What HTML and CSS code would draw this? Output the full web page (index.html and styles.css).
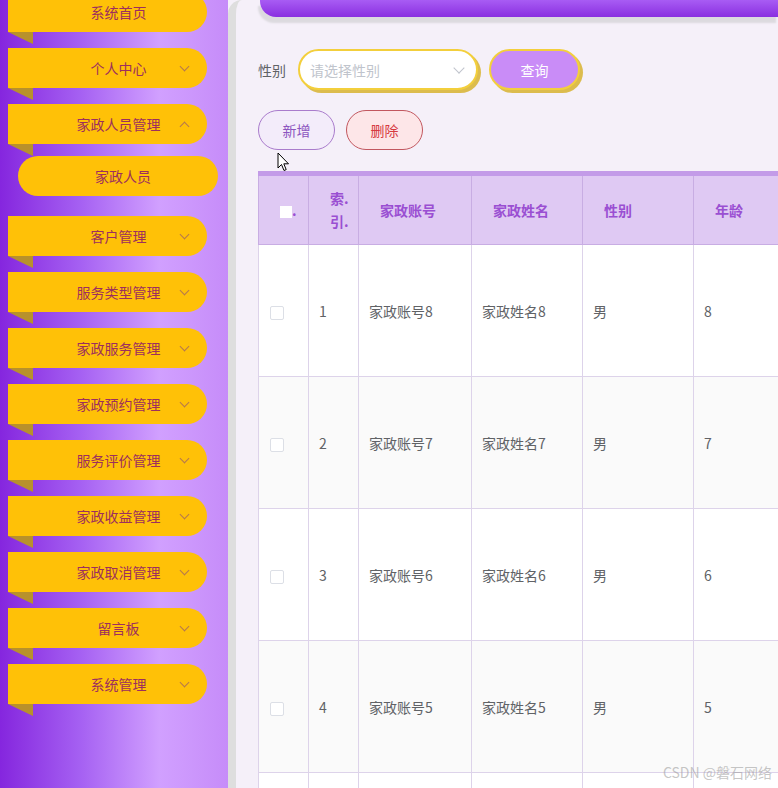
FILE: index.html
```html
<!DOCTYPE html>
<html lang="zh-CN">
	<head>
		<meta charset="UTF-8" />
		<meta name="viewport" content="width=device-width, initial-scale=1.0" />
		<title>家政人员</title>
		<link rel="stylesheet" href="styles.css">
	</head>

	<body>
		<div class="sidebar">
			<ul class="menu">
				<li class="item">系统首页</li>
				<li class="item has-sub">个人中心<span class="arrow"></span></li>
				<li class="item has-sub open">家政人员管理<span class="arrow up"></span></li>
				<li class="sub-item">家政人员</li>
				<li class="item has-sub">客户管理<span class="arrow"></span></li>
				<li class="item has-sub">服务类型管理<span class="arrow"></span></li>
				<li class="item has-sub">家政服务管理<span class="arrow"></span></li>
				<li class="item has-sub">家政预约管理<span class="arrow"></span></li>
				<li class="item has-sub">服务评价管理<span class="arrow"></span></li>
				<li class="item has-sub">家政收益管理<span class="arrow"></span></li>
				<li class="item has-sub">家政取消管理<span class="arrow"></span></li>
				<li class="item has-sub">留言板<span class="arrow"></span></li>
				<li class="item has-sub">系统管理<span class="arrow"></span></li>
			</ul>
		</div>

		<div class="main">
			<div class="topbar"></div>

			<div class="search">
				<label class="search-label">性别</label>
				<div class="select">
					<span class="placeholder">请选择性别</span>
					<span class="select-arrow"></span>
				</div>
				<button class="btn-query">查询</button>
			</div>

			<div class="actions">
				<button class="btn-add">新增</button>
				<button class="btn-del">删除</button>
			</div>

			<table class="grid">
				<colgroup>
					<col style="width: 50px" />
					<col style="width: 50px" />
					<col style="width: 113px" />
					<col style="width: 111px" />
					<col style="width: 111px" />
					<col style="width: 111px" />
				</colgroup>
				<thead>
					<tr>
						<th><span class="check head-check"></span>.</th>
						<th>索.<br />引.</th>
						<th>家政账号</th>
						<th>家政姓名</th>
						<th>性别</th>
						<th>年龄</th>
					</tr>
				</thead>
				<tbody>
					<tr>
						<td><span class="check"></span></td>
						<td>1</td>
						<td>家政账号8</td>
						<td>家政姓名8</td>
						<td>男</td>
						<td>8</td>
					</tr>
					<tr>
						<td><span class="check"></span></td>
						<td>2</td>
						<td>家政账号7</td>
						<td>家政姓名7</td>
						<td>男</td>
						<td>7</td>
					</tr>
					<tr>
						<td><span class="check"></span></td>
						<td>3</td>
						<td>家政账号6</td>
						<td>家政姓名6</td>
						<td>男</td>
						<td>6</td>
					</tr>
					<tr>
						<td><span class="check"></span></td>
						<td>4</td>
						<td>家政账号5</td>
						<td>家政姓名5</td>
						<td>男</td>
						<td>5</td>
					</tr>
					<!-- next row starts at the bottom edge -->
					<tr>
						<td></td>
						<td></td>
						<td></td>
						<td></td>
						<td></td>
						<td></td>
					</tr>
				</tbody>
			</table>

			<!-- mouse pointer captured in the screenshot -->
			<svg class="cursor" width="13" height="20" viewBox="0 0 13 20">
				<path d="M1 1 L1 16 L4.5 12.5 L7 18.5 L9.2 17.6 L6.8 11.8 L11.5 11.8 Z" fill="#fff" stroke="#000" stroke-width="1" stroke-linejoin="round" />
			</svg>

			<div class="watermark">CSDN @磐石网络</div>
		</div>
	</body>
</html>
```

FILE: styles.css
```css
* {
	box-sizing: border-box;
}

body {
	margin: 0;
	height: 788px;
	overflow: hidden;
	display: flex;
	font-family: "Noto Sans CJK SC", "Liberation Sans", sans-serif;
	font-size: 14px;
	background: #f5f0f9;
}

/* sidebar */

.sidebar {
	width: 228px;
	flex-shrink: 0;
	height: 100%;
	background: linear-gradient(90deg, #8526de 0%, #a560f2 35%, #d1a0ff 70%, #c68cf9 100%);
}

.menu {
	list-style: none;
	margin: -8px 0 0;
	padding: 0;
}

.item {
	position: relative;
	margin: 0 0 16px 8px;
	width: 199px;
	height: 40px;
	line-height: 40px;
	padding-left: 22px;
	text-align: center;
	color: #9c2f5e;
	background: #ffc107;
	border-radius: 0 20px 20px 0;
}

/* folded ribbon corner under each item */
.item::after {
	content: "";
	position: absolute;
	left: 0;
	top: 40px;
	border-top: 12px solid #b8912c;
	border-left: 25px solid transparent;
}

.item.open {
	margin-bottom: 12px;
}

.sub-item {
	margin: 0 0 20px 18px;
	width: 200px;
	height: 40px;
	line-height: 40px;
	padding-left: 10px;
	text-align: center;
	color: #9c2f5e;
	background: #ffc107;
	border-radius: 20px;
}

.arrow {
	position: absolute;
	right: 19px;
	top: 15px;
	width: 7px;
	height: 7px;
	border-right: 1px solid #b5784e;
	border-bottom: 1px solid #b5784e;
	transform: rotate(45deg);
}

.arrow.up {
	top: 19px;
	transform: rotate(-135deg);
}

/* main area */

.main {
	position: relative;
	flex: 1;
	min-width: 0;
	height: 100%;
	overflow: hidden;
	border-left: 8px solid #dedede;
	border-top-left-radius: 14px;
	padding-left: 22px;
}

.topbar {
	margin-left: 2px;
	height: 17px;
	border-bottom-left-radius: 16px;
	background: linear-gradient(180deg, #a85cf4, #8a2fe0);
	box-shadow: -2px 6px 2px #dcdadf;
}

.search {
	display: flex;
	align-items: center;
	margin-top: 32px;
	height: 41px;
}

.search-label {
	color: #606266;
	margin-right: 12px;
}

.select {
	position: relative;
	width: 180px;
	height: 41px;
	border: 2px solid #f3cf3c;
	border-radius: 21px;
	background: #fff;
	box-shadow: 3px 3px 0 #dcbc4e;
	display: flex;
	align-items: center;
	padding-left: 10px;
}

.placeholder {
	color: #c0c4cc;
}

.select-arrow {
	position: absolute;
	right: 13px;
	top: 13px;
	width: 8px;
	height: 8px;
	border-right: 1px solid #c0c4cc;
	border-bottom: 1px solid #c0c4cc;
	transform: rotate(45deg);
}

button {
	font-family: inherit;
	font-size: 14px;
	cursor: pointer;
}

.btn-query {
	margin-left: 11px;
	width: 91px;
	height: 41px;
	border: 2px solid #f3cf3c;
	border-radius: 21px;
	background: #c98cf7;
	color: #fff;
	box-shadow: 3px 3px 0 #dcbc4e;
}

.actions {
	display: flex;
	gap: 11px;
	margin-top: 20px;
}

.btn-add,
.btn-del {
	width: 77px;
	height: 40px;
	border-radius: 20px;
}

.btn-add {
	border: 1px solid #a97bcc;
	background: #f3ecfa;
	color: #8c55bf;
}

.btn-del {
	border: 1px solid #c2575f;
	background: #fde6e8;
	color: #d6393f;
}

/* table */

.grid {
	margin-top: 21px;
	border-collapse: collapse;
	table-layout: fixed;
	width: 546px;
	border-top: 5px solid #c39be8;
}

.grid th {
	height: 71px;
	background: #dfc9f3;
	color: #9a4fd2;
	font-weight: 600;
	text-align: left;
	border: 1px solid #c8ade3;
	border-top: none;
	line-height: 23px;
	padding: 0 0 0 21px;
	white-space: nowrap;
}

.grid td {
	height: 132px;
	color: #606266;
	border: 1px solid #ddd3ea;
	padding: 0 10px;
	background: #fff;
}

.grid tbody tr:nth-child(even) td {
	background: #fafafa;
}

.check {
	display: inline-block;
	width: 14px;
	height: 14px;
	border: 1px solid #dcdfe6;
	border-radius: 2px;
	background: #fff;
	vertical-align: middle;
}

.grid td:first-child {
	padding-left: 11px;
}

.head-check {
	width: 12px;
	height: 12px;
	border: none;
	border-radius: 0;
}

.cursor {
	position: absolute;
	left: 41px;
	top: 152px;
}

.watermark {
	position: absolute;
	right: 6px;
	bottom: 6px;
	color: rgba(160, 160, 160, 0.6);
	font-size: 14px;
}
```
